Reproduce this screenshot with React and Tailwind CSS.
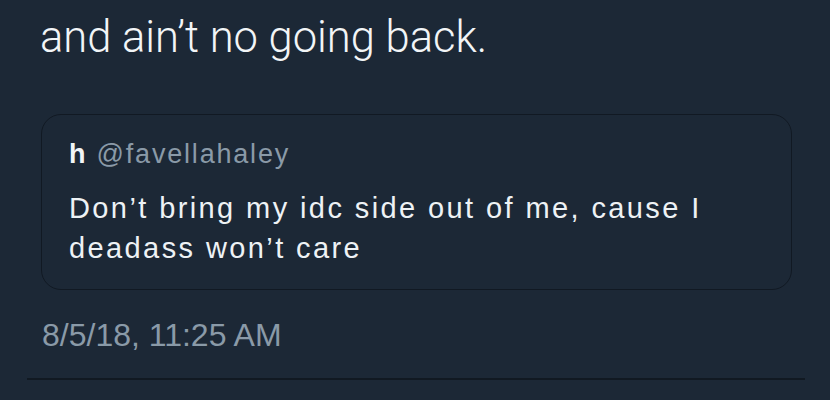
export default function App() {
  return (
    <div className="w-[830px] h-[400px] bg-[#1c2836] overflow-hidden flex flex-col">
      {/* Tweet text */}
      <h1
        className="pt-[13px] pl-[40px] text-[43.5px] leading-[50px] font-light text-[#f2f5f7]"
        style={{ fontFamily: "Roboto, 'Liberation Sans', sans-serif" }}
      >
        and ain’t no going back.
      </h1>

      {/* Quoted tweet */}
      <div
        className="mt-[51px] ml-[41px] mr-[38px] h-[176px] rounded-[20px] border-[1.5px] border-[#111923] pt-[23px] pl-[27px]"
        style={{ fontFamily: "'Liberation Sans', Arial, sans-serif" }}
      >
        <p className="text-[27px] leading-[32px] tracking-[1.8px]">
          <span className="font-bold text-[#f2f5f7]">h</span>{" "}
          <span className="text-[#8a9aa8]">@favellahaley</span>
        </p>
        <p className="mt-[18px] text-[29px] leading-[40px] tracking-[2.4px] text-[#eef2f5]">
          Don’t bring my idc side out of me, cause I
          <br />
          deadass won’t care
        </p>
      </div>

      {/* Timestamp */}
      <p
        className="mt-[27px] pl-[42px] text-[32px] leading-[36px] text-[#8a9aa8]"
        style={{ fontFamily: "'Liberation Sans', Arial, sans-serif" }}
      >
        8/5/18, 11:25 AM
      </p>

      <div className="mt-[25px] ml-[27px] mr-[25px] h-[2px] bg-[#111922]" />
    </div>
  );
}
